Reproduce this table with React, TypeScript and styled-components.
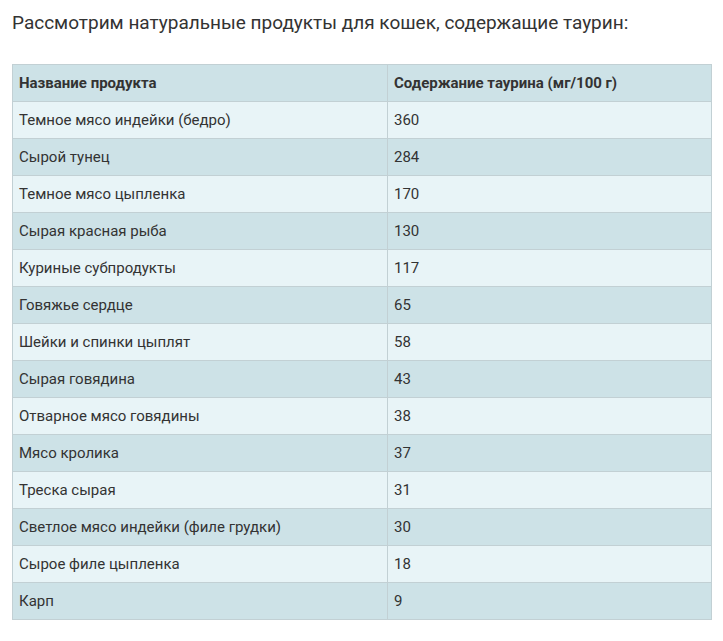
import styled, { createGlobalStyle } from 'styled-components';

const GlobalStyle = createGlobalStyle`
  html, body {
    margin: 0;
    padding: 0;
    background: #ffffff;
    font-family: Roboto, "Liberation Sans", sans-serif;
    color: #333333;
  }
`;

const Page = styled.div`
  padding: 10px 12px 0 12px;
  width: 699px;
`;

const Lead = styled.p`
  margin: 0 0 28px 0;
  font-size: 19px;
  line-height: 26px;
  color: #333333;
`;

const Table = styled.table`
  width: 700px;
  border-collapse: collapse;
  table-layout: fixed;
  font-size: 15px;
`;

const Row = styled.tr<{ $light?: boolean }>`
  height: 37px;
  background: ${({ $light }) => ($light ? '#e8f4f7' : '#cde2e7')};
`;

const HeadCell = styled.th<{ $width?: number }>`
  border: 1px solid #c2d0d4;
  padding: 0 6px;
  text-align: left;
  font-weight: 700;
  color: #333333;
  width: ${({ $width }) => ($width ? `${$width}px` : 'auto')};
`;

const Cell = styled.td`
  border: 1px solid #c2d0d4;
  padding: 0 6px;
  color: #333333;
`;

const rows: [string, string][] = [
  ['Темное мясо индейки (бедро)', '360'],
  ['Сырой тунец', '284'],
  ['Темное мясо цыпленка', '170'],
  ['Сырая красная рыба', '130'],
  ['Куриные субпродукты', '117'],
  ['Говяжье сердце', '65'],
  ['Шейки и спинки цыплят', '58'],
  ['Сырая говядина', '43'],
  ['Отварное мясо говядины', '38'],
  ['Мясо кролика', '37'],
  ['Треска сырая', '31'],
  ['Светлое мясо индейки (филе грудки)', '30'],
  ['Сырое филе цыпленка', '18'],
  ['Карп', '9'],
];

export default function App() {
  return (
    <>
      <GlobalStyle />
      <Page>
        <Lead>Рассмотрим натуральные продукты для кошек, содержащие таурин:</Lead>
        <Table>
          <thead>
            <Row>
              <HeadCell $width={362}>Название продукта</HeadCell>
              <HeadCell>Содержание таурина (мг/100 г)</HeadCell>
            </Row>
          </thead>
          <tbody>
            {rows.map(([name, value], i) => (
              <Row key={name} $light={i % 2 === 0}>
                <Cell>{name}</Cell>
                <Cell>{value}</Cell>
              </Row>
            ))}
          </tbody>
        </Table>
      </Page>
    </>
  );
}
